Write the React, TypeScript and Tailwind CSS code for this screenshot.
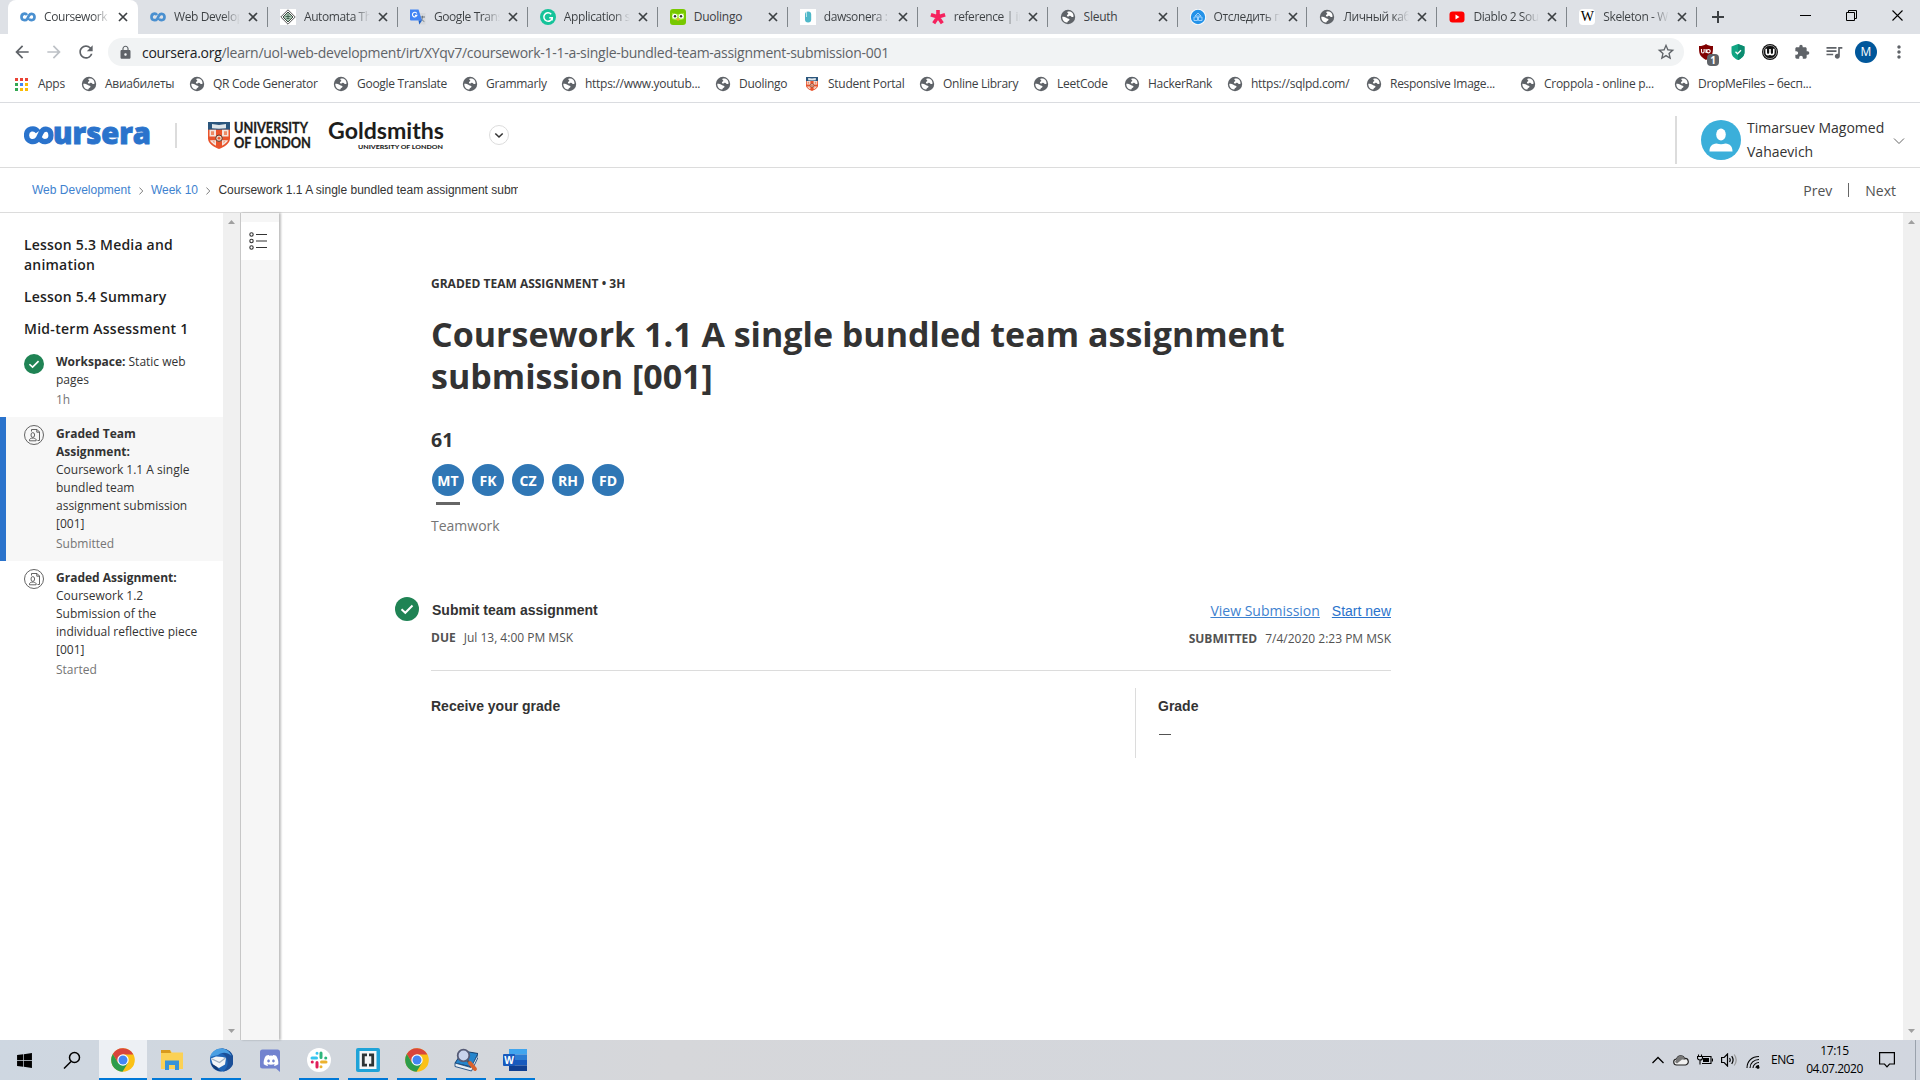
import React from "react";
import {
  MdArrowBack,
  MdArrowForward,
  MdRefresh,
  MdLock,
  MdStarBorder,
  MdExtension,
  MdMoreVert,
  MdQueueMusic,
} from "react-icons/md";
import { FaDiscord, FaWindows } from "react-icons/fa";

const Globe = () => (
  <svg viewBox="0 0 16 16" className="size-4 shrink-0">
    <circle cx="8" cy="8" r="7.200" fill="#5f6368" />
    <path d="M7.200 3c1.500-.8 3.800-.4 5 .8.900 1 1.400 2.400 1.300 3.900-.9.600-1.800.500-2.300-.2-.6-.9-1.600-.7-2.300-.3-.7.500-2 .3-2-.7 0-.8 1.400-.9 1.400-1.700 0-.7-1.100-.9-1.100-1.800z" fill="#fff" />
    <path d="M2.300 7.800c1.700.1 3.600.4 4.600 1.100 1 .700 2.600.5 2.600 1.500 0 1.100-1.400 1.200-1.800 2.100-.2.600-.2 1-.9 1.100C4.200 13.300 2.200 11 2.300 7.800z" fill="#fff" />
  </svg>
);

const CourseraMark = () => (
  <svg viewBox="0 0 16 16" className="size-4 shrink-0" fill="none" stroke="#4a90d0" strokeWidth="2.700">
    <path d="M7 6C5.500 3.800 1.500 4.500 1.500 8s4 4 5.800 1.800L9 6.500C10.500 4 14.500 4.500 14.500 8s-4 4-5.600 1.700" />
  </svg>
);

const Crest = ({ className }: { className: string }) => (
  <svg viewBox="0 0 22 28" className={className} preserveAspectRatio="none">
    <path d="M0 0h22v17c0 5-6 9-11 11C6 26 0 22 0 17z" fill="#e9532b" />
    <path d="M0 0h22v8H0z" fill="#2b567d" />
    <path d="M4 2l7 1 7-1v4.500l-7 .5-7-.5z" fill="#dfe6ea" />
    <path d="M1.500 8h6.500v7H1.500zM14 8h6.500v7H14zM2 19h6v5.500C5 23 2.500 21 2 19zM20 19h-6v5.500c3-1.500 5.500-3.500 6-5.500z" fill="#f4e4dc" />
    <path d="M3 9.500h3v4H3zM16 9.500h3v4h-3zM4.500 20h2v2zM17.500 20h-2v2z" fill="#ee8b66" />
    <circle cx="11" cy="16.800" r="3.300" fill="#f0cdb8" stroke="#5a3a30" strokeWidth="1" />
    <circle cx="11" cy="16.800" r="1.300" fill="#e9532b" />
  </svg>
);

const Automata = () => (
  <svg viewBox="0 0 16 16" className="size-4 shrink-0">
    <path d="M0 0h16v16H0z" fill="#fff" />
    <path d="M8 .8L15.200 8 8 15.200.800 8z" fill="none" stroke="#444" strokeWidth=".9" />
    <path d="M8 3l5 5-5 5-5-5z" fill="#a9c4b3" stroke="#3c4a40" strokeWidth="1" />
    <path d="M5.500 7.500h5M6.500 9.500h3M8 5v5" stroke="#385a45" strokeWidth=".8" />
  </svg>
);

const TranslateMark = () => (
  <svg viewBox="0 0 16 16" className="size-4 shrink-0">
    <path d="M7 4h8.500v11.500H9z" fill="#d5d8dc" />
    <path d="M10 8h5M12.500 6.800V8c0 2-1.500 4-2.500 4.500M11 9.500c.5 1 2 2.500 3.300 3" stroke="#6b7680" fill="none" />
    <path d="M0 .5h8.500l3.500 11H1a1 1 0 01-1-1z" fill="#4285f4" />
    <path d="M8.500 11.500h3.500l-2.700 4z" fill="#1a5fc8" />
    <path d="M6.800 4.500A2.300 2.300 0 106.900 6.400H5" stroke="#fff" strokeWidth="1.100" fill="none" />
  </svg>
);

const GrammarlyMark = () => (
  <svg viewBox="0 0 16 16" className="size-4 shrink-0">
    <circle cx="8" cy="8" r="8" fill="#15c39a" />
    <path d="M11.200 5.200A4.200 4.200 0 1012.200 8.800H9.300M12.300 8.800l-.3 2.700" stroke="#fff" strokeWidth="1.500" fill="none" />
  </svg>
);

const DuolingoMark = () => (
  <svg viewBox="0 0 16 16" className="size-4 shrink-0">
    <rect width="16" height="16" rx="3" fill="#78c800" />
    <path d="M2 4q6 2 12 0v6q-6 2.500-12 0z" fill="#a5ed3c" />
    <circle cx="4.800" cy="7.200" r="2.500" fill="#fff" />
    <circle cx="11.200" cy="7.200" r="2.500" fill="#fff" />
    <circle cx="5" cy="7.200" r="1.200" fill="#333" />
    <circle cx="11" cy="7.200" r="1.200" fill="#333" />
    <path d="M6.200 9.500h3.600L8 12.300z" fill="#f5a623" />
  </svg>
);

const DawsonMark = () => (
  <svg viewBox="0 0 16 16" className="size-4 shrink-0">
    <path d="M0 0h16v16H0z" fill="#fff" />
    <rect x="5" y="2.500" width="6.200" height="11" rx="3" fill="#4fb8c9" />
    <path d="M6.500 3v5" stroke="#b8e4ea" />
  </svg>
);

const StarMark = () => (
  <svg viewBox="0 0 16 16" className="size-4 shrink-0" stroke="#f5225e" strokeWidth="3.600">
    <path d="M8 8V1M8 8L.900 5.700M8 8l7.100-2.300M8 8l-4.300 6.300M8 8l4.300 6.300" />
  </svg>
);

const TrackMark = () => (
  <svg viewBox="0 0 16 16" className="size-4 shrink-0">
    <circle cx="8" cy="8" r="8" fill="#fff" />
    <circle cx="8" cy="8" r="7.200" fill="#2492e8" />
    <path d="M5 7l3-3 3 3zM4 8h3.500v3.500H4zM8.500 8H12v3.500H8.500z" fill="none" stroke="#a9d8ff" strokeWidth=".9" />
  </svg>
);

const YoutubeMark = () => (
  <svg viewBox="0 0 16 16" className="size-4 shrink-0">
    <rect x=".5" y="2.500" width="15" height="11" rx="3" fill="#f00" />
    <path d="M6.500 5.600v4.800L10.500 8z" fill="#fff" />
  </svg>
);

const WikiMark = () => (
  <span className="flex size-4 shrink-0 items-center justify-center rounded-sm bg-white font-['Liberation_Serif',serif] text-[14px] leading-4 text-black">
    W
  </span>
);

const tabs: { label: string; icon: React.ReactNode }[] = [
  { label: "Coursework", icon: <CourseraMark /> },
  { label: "Web Develop", icon: <CourseraMark /> },
  { label: "Automata Th", icon: <Automata /> },
  { label: "Google Trans", icon: <TranslateMark /> },
  { label: "Application s", icon: <GrammarlyMark /> },
  { label: "Duolingo", icon: <DuolingoMark /> },
  { label: "dawsonera :", icon: <DawsonMark /> },
  { label: "reference | in", icon: <StarMark /> },
  { label: "Sleuth", icon: <Globe /> },
  { label: "Отследить п", icon: <TrackMark /> },
  { label: "Личный каб", icon: <Globe /> },
  { label: "Diablo 2 Sou", icon: <YoutubeMark /> },
  { label: "Skeleton - W", icon: <WikiMark /> },
];

const bookmarks: { label: string; width: string; crest?: boolean }[] = [
  { label: "Авиабилеты", width: "w-[108px]" },
  { label: "QR Code Generator", width: "w-[144px]" },
  { label: "Google Translate", width: "w-[129px]" },
  { label: "Grammarly", width: "w-[99px]" },
  { label: "https://www.youtub...", width: "w-[154px]" },
  { label: "Duolingo", width: "w-[89px]" },
  { label: "Student Portal", width: "w-[115px]", crest: true },
  { label: "Online Library", width: "w-[114px]" },
  { label: "LeetCode", width: "w-[91px]" },
  { label: "HackerRank", width: "w-[103px]" },
  { label: "https://sqlpd.com/", width: "w-[139px]" },
  { label: "Responsive Image...", width: "w-[154px]" },
  { label: "Croppola - online p...", width: "w-[154px]" },
  { label: "DropMeFiles – бесп...", width: "w-[154px]" },
];

function TabStrip() {
  return (
    <div className="flex h-[34px] bg-[#dee1e6] pl-2">
      {tabs.map((tab, i) => (
        <div
          key={tab.label}
          className={
            i === 0
              ? "relative flex h-[34px] w-[130px] shrink-0 items-center rounded-t-lg bg-white pl-3"
              : "relative flex h-[34px] w-[129.95px] shrink-0 items-center pl-3"
          }
        >
          {tab.icon}
          <span
            className={
              tab.label.length > 9
                ? "ml-2 w-[66px] overflow-hidden whitespace-nowrap bg-linear-to-r from-[#3c4043] from-75% to-transparent bg-clip-text text-[12px] tracking-[-0.4px] text-transparent"
                : "ml-2 w-[66px] overflow-hidden whitespace-nowrap text-[12px] tracking-[-0.25px] text-[#3c4043]"
            }
          >
            {tab.label}
          </span>
          <svg viewBox="0 0 10 10" className="ml-[8px] size-[10px] shrink-0" stroke="#3c4043" strokeWidth="1.700">
            <path d="M1 1l8 8M9 1L1 9" />
          </svg>
          {i > 0 && <span className="absolute top-[7px] right-0 h-5 w-px bg-[#80868b]" />}
        </div>
      ))}
      <svg viewBox="0 0 14 14" className="mt-[10px] ml-[14px] size-[14px]" stroke="#3c4043" strokeWidth="2">
        <path d="M7 1v12M1 7h12" />
      </svg>
      <div className="mt-[9px] mr-[17px] ml-auto flex h-3 items-center gap-[35px]">
        <svg viewBox="0 0 11 11" className="size-[11px]" stroke="#000">
          <path d="M0 5.500h11" />
        </svg>
        <svg viewBox="0 0 11 11" className="size-[11px]" stroke="#000" fill="none">
          <path d="M.5 2.500h8v8h-8zM2.500 2.500v-2h8v8h-2" />
        </svg>
        <svg viewBox="0 0 11 11" className="size-[11px]" stroke="#000" strokeWidth="1.100">
          <path d="M.5.5l10 10M10.500.5l-10 10" />
        </svg>
      </div>
    </div>
  );
}

function Toolbar() {
  return (
    <div className="flex h-9 items-center pl-3">
      <MdArrowBack className="size-5 text-[#5f6368]" />
      <MdArrowForward className="ml-3 size-5 text-[#bdc1c6]" />
      <MdRefresh className="ml-3 size-5 text-[#5f6368]" />
      <div className="ml-3 flex h-7 w-[1576px] items-center rounded-full bg-[#f1f3f4] pr-2 pl-[10px]">
        <MdLock className="size-[15px] text-[#5f6368]" />
        <span className="ml-[9px] text-[14px] tracking-[-0.285px] whitespace-nowrap text-[#5f6368]">
          <span className="text-[#202124]">coursera.org</span>
          /learn/uol-web-development/irt/XYqv7/coursework-1-1-a-single-bundled-team-assignment-submission-001
        </span>
        <MdStarBorder className="ml-auto size-5 text-[#5f6368]" />
      </div>
      <div className="relative ml-[14px]">
        <svg viewBox="0 0 16 16" className="size-4">
          <path d="M8 0c2 1.500 4 2 7 2 0 7 0 10-7 14C1 12 1 9 1 2c3 0 5-.5 7-2z" fill="#800000" />
          <path d="M3.500 5v2.500q0 1.500 1.300 1.500t1.300-1.500V5M8 5v4M10.500 5.500a1.700 1.700 0 110 3.400 1.700 1.700 0 010-3.400z" stroke="#fff" strokeWidth="1.100" fill="none" />
        </svg>
        <span className="absolute top-[10px] left-[9px] flex h-3 w-3 items-center justify-center rounded-sm bg-[#5f6368] text-[10px] leading-3 font-bold text-white">
          1
        </span>
      </div>
      <svg viewBox="0 0 14 16" className="ml-[17px] h-4 w-[14px]">
        <path d="M7 0l6.500 2.500v5.500c0 4-3 6.500-6.500 8C3.500 14.500.500 12 .500 8V2.500z" fill="#11a683" />
        <path d="M7 0l6.500 2.500v5.500c0 4-3 6.500-6.500 8z" fill="#0c8c70" />
        <path d="M4.500 7.800l2 2 3.500-3.600" stroke="#fff" strokeWidth="1.300" fill="none" />
      </svg>
      <svg viewBox="0 0 16 16" className="ml-[17px] size-4">
        <circle cx="8" cy="8" r="8" fill="#111" />
        <circle cx="8" cy="8" r="6.600" fill="none" stroke="#ddd" strokeWidth=".6" />
        <path d="M4.200 4.800v3.700q0 2.200 1.800 2.200T8 8.500V5M8 8.500q0 2.200 1.900 2.200t1.900-2.200V4.800" fill="none" stroke="#fff" strokeWidth="1.600" />
      </svg>
      <MdExtension className="ml-4 size-4 text-[#5f6368]" />
      <MdQueueMusic className="ml-[14px] size-5 text-[#5f6368]" />
      <span className="ml-[11px] flex size-[22px] items-center justify-center rounded-full bg-[#01579b] text-[12px] text-white">
        M
      </span>
      <MdMoreVert className="ml-3 size-5 text-[#5f6368]" />
    </div>
  );
}

const appDots = [
  "bg-[#ea4335]", "bg-[#ea4335]", "bg-[#ea4335]",
  "bg-[#34a853]", "bg-[#4285f4]", "bg-[#fbbc05]",
  "bg-[#34a853]", "bg-[#fbbc05]", "bg-[#fbbc05]",
];

function BookmarkBar() {
  return (
    <div className="flex h-[33px] items-center border-b border-[#dadce0] pb-1 pl-[15px] text-[12px] tracking-[-0.28px] text-[#3c4043]">
      <div className="grid grid-cols-3 gap-[2px]">
        {appDots.map((c, i) => (
          <span key={i} className={`size-[3px] ${c}`} />
        ))}
      </div>
      <span className="ml-[10px] w-[43px]">Apps</span>
      {bookmarks.map((b) => (
        <div key={b.label} className={`flex shrink-0 items-center whitespace-nowrap ${b.width}`}>
          {b.crest ? <Crest className="mx-[2px] h-[14px] w-3" /> : <Globe />}
          <span className="ml-2">{b.label}</span>
        </div>
      ))}
    </div>
  );
}

function SiteHeader() {
  return (
    <header className="flex h-[65px] border-b border-[#dcdcdc] pl-6">
      <svg viewBox="0 0 128 20" className="mt-[22px] h-5 w-32" aria-label="coursera">
        <path
          d="M14 6.800C10.500 1.700 2.500 3.500 2.500 10.200S10.500 19 14.300 13.500L17 8C19.500 2.200 27 3 27 10.200S18.500 18.500 15.500 13.200"
          fill="none"
          stroke="#2a73cc"
          strokeWidth="5.200"
        />
        <text x="29" y="19" fill="#2a73cc" stroke="#2a73cc" strokeWidth=".9" textLength="98" lengthAdjust="spacingAndGlyphs" className="font-['Open_Sans',sans-serif] text-[30px] font-extrabold">
          ursera
        </text>
      </svg>
      <span className="mt-5 ml-[23px] h-[25px] w-[2px] bg-[#dcdcdc]" />
      <Crest className="mt-[19px] ml-[31px] h-[27px] w-[22px]" />
      <svg viewBox="0 0 80 30" className="mt-[18px] ml-[3px] h-[30px] w-20" fill="#1d1d1b" stroke="#1d1d1b" strokeWidth=".3">
        <text x="1" y="11.500" textLength="74" lengthAdjust="spacingAndGlyphs" className="font-['Lato',sans-serif] text-[14.5px] font-bold">UNIVERSITY</text>
        <text x="1" y="26.500" textLength="77" lengthAdjust="spacingAndGlyphs" className="font-['Lato',sans-serif] text-[14.5px] font-bold">OF LONDON</text>
      </svg>
      <svg viewBox="0 0 120 30" className="mt-[18px] ml-[15px] h-[30px] w-[120px]" fill="#1d1d1b">
        <text x="0" y="18" textLength="116" lengthAdjust="spacingAndGlyphs" className="font-['Lato',sans-serif] text-[22.5px] font-bold">Goldsmiths</text>
        <text x="30" y="27.500" textLength="85" lengthAdjust="spacingAndGlyphs" className="font-['Lato',sans-serif] text-[6px] font-black">UNIVERSITY OF LONDON</text>
      </svg>
      <svg viewBox="0 0 20 20" className="mt-[22px] ml-[41px] size-5" fill="none">
        <circle cx="10" cy="10" r="9.500" stroke="#dcdcdc" />
        <path d="M6.300 8.500L10 12l3.700-3.500" stroke="#333" strokeWidth="1.600" />
      </svg>
      <div className="ml-auto flex">
        <span className="mt-[13px] h-12 w-[2px] bg-[#dcdcdc]" />
        <svg viewBox="0 0 40 40" className="mt-[17px] ml-6 size-10">
          <circle cx="20" cy="20" r="20" fill="#3bafda" />
          <ellipse cx="20" cy="14.500" rx="4.800" ry="6" fill="#fff" />
          <path d="M8.500 31.500c0-5.500 2.500-7.500 7-8 3 1 6 1 9 0 4.500.500 7 2.500 7 8z" fill="#fff" />
        </svg>
        <span className="mt-[13px] ml-[6px] w-[146px] text-[14px] leading-6 text-[#333]">
          Timarsuev Magomed Vahaevich
        </span>
        <svg viewBox="0 0 12 8" className="mt-[34px] mr-[15px] h-2 w-3" fill="none" stroke="#666">
          <path d="M1 1.500l5 5 5-5" />
        </svg>
      </div>
    </header>
  );
}

const Crumb = () => (
  <svg viewBox="0 0 5 8" className="mx-2 mt-[2px] h-2 w-[4.4px] shrink-0" fill="none" stroke="#777" preserveAspectRatio="none">
    <path d="M.5.5L4.300 4 .500 7.500" />
  </svg>
);

function Breadcrumbs() {
  return (
    <div className="flex h-[45px] items-center border-b border-[#dcdcdc] pl-8">
      <div className="flex w-[486px] items-center overflow-hidden font-['Liberation_Sans',Arial,sans-serif] text-[12px] whitespace-nowrap text-[#333]">
        <span className="text-[#3e82cf]">Web Development</span>
        <Crumb />
        <span className="text-[#3e82cf]">Week 10</span>
        <Crumb />
        <span>Coursework 1.1 A single bundled team assignment submission [001]</span>
      </div>
      <div className="mr-6 ml-auto flex items-center text-[14px] text-[#525252]">
        <span>Prev</span>
        <span className="mx-4 h-[14px] w-px bg-[#666]" />
        <span>Next</span>
      </div>
    </div>
  );
}

const CheckCircle = ({ className }: { className: string }) => (
  <svg viewBox="0 0 24 24" className={className} fill="none">
    <circle cx="12" cy="12" r="12" fill="#1f8354" />
    <path d="M6.500 12.300l3.800 3.500 7.200-7.300" stroke="#fff" strokeWidth="2" />
  </svg>
);

const PeerIcon = () => (
  <svg viewBox="0 0 20 20" className="absolute top-2 left-6 size-5" fill="none" stroke="#525252" strokeWidth=".9">
    <circle cx="10" cy="10" r="9.500" />
    <path d="M7.500 6.500v-2h5.500l2.500 2.500v8.500h-2M12.800 4.500V7.200h2.700M5.500 15.800v-1.300c.6-1 1.500-1 2.300-1.400h1.900c.8.400 1.800.400 2.400 1.400v1.300z" />
    <ellipse cx="8.800" cy="10" rx="1.800" ry="2.400" />
  </svg>
);

const ScrollBar = () => (
  <div className="flex w-[17px] shrink-0 flex-col items-center justify-between bg-[#f0f0f0] py-[7px]">
    <svg viewBox="0 0 7 4" className="h-1 w-[7px]" fill="#a0a0a0"><path d="M0 4l3.500-4L7 4z" /></svg>
    <svg viewBox="0 0 7 4" className="h-1 w-[7px]" fill="#a0a0a0"><path d="M0 0l3.500 4L7 0z" /></svg>
  </div>
);

function Sidebar() {
  return (
    <aside className="w-[223px] shrink-0 pt-[22px] text-[#333]">
      <div className="flex flex-col gap-3 pl-6 text-[14px] leading-5 font-semibold tracking-[0.2px] text-[#1f1f1f]">
        <h3 className="w-[160px]">Lesson 5.3 Media and animation</h3>
        <h3>Lesson 5.4 Summary</h3>
        <h3 className="tracking-[0.28px]">Mid-term Assessment 1</h3>
      </div>
      <div className="text-[12px] leading-[18px]">
        <div className="relative mt-[6px] h-[72px] pt-2 pl-14">
          <CheckCircle className="absolute top-[9px] left-6 size-5" />
          <p className="w-[140px]"><b>Workspace:</b> Static web pages</p>
          <p className="mt-[2px] text-[#757575]">1h</p>
        </div>
        <div className="relative h-36 border-l-[6px] border-[#2a73cc] bg-[#f7f7f7] pt-2 pl-[50px]">
          <div className="absolute top-0 left-0 -ml-[6px]"><PeerIcon /></div>
          <p className="w-[140px]"><b>Graded Team<br />Assignment:</b><br />Coursework 1.1 A single<br />bundled team<br />assignment submission<br />[001]</p>
          <p className="mt-[2px] text-[#757575]">Submitted</p>
        </div>
        <div className="relative h-36 pt-2 pl-14">
          <PeerIcon />
          <p className="w-[150px]"><b>Graded Assignment:</b><br />Coursework 1.2<br />Submission of the<br />individual reflective piece<br />[001]</p>
          <p className="mt-[2px] text-[#757575]">Started</p>
        </div>
      </div>
    </aside>
  );
}

function Assignment() {
  return (
    <main className="w-[960px] pt-[62px] text-[#333]">
      <p className="text-[12px] leading-[18px] font-bold">GRADED TEAM ASSIGNMENT • 3H</p>
      <h1 className="mt-5 text-[34px] leading-[42px] font-bold">
        Coursework 1.1 A single bundled team assignment submission [001]
      </h1>
      <h2 className="mt-[31px] text-[19.5px] leading-6 font-bold">61</h2>
      <div className="mt-3 flex gap-2 pl-px">
        {["MT", "FK", "CZ", "RH", "FD"].map((m) => (
          <div key={m} className="flex w-8 flex-col items-center">
            <span className="flex size-8 items-center justify-center rounded-full bg-[#3077b5] text-[14px] font-bold text-white">{m}</span>
            {m === "MT" && <span className="mt-[6px] h-[3px] w-6 bg-[#666]" />}
          </div>
        ))}
      </div>
      <p className="mt-[11px] text-[14px] leading-5 text-[#757575]">Teamwork</p>
      <div className="mt-[61px] flex justify-between">
        <div className="relative">
          <CheckCircle className="absolute top-0 -left-9 size-6" />
          <p className="pt-[3px] pl-px font-['Liberation_Sans',Arial,sans-serif] text-[14px] leading-5 font-bold">Submit team assignment</p>
          <p className="mt-[9px] text-[12px] leading-[18px] text-[#525252]"><b>DUE</b><span className="ml-2">Jul 13, 4:00 PM MSK</span></p>
        </div>
        <div className="text-right">
          <p className="pt-1 text-[14px] leading-5 text-[#2a73cc]">
            <span className="text-[#3e82cf] underline">View Submission</span>
            <span className="ml-3 font-['Liberation_Sans',Arial,sans-serif] underline">Start new</span>
          </p>
          <p className="mt-[9px] text-[12px] leading-[18px] text-[#525252]"><b>SUBMITTED</b><span className="ml-2">7/4/2020 2:23 PM MSK</span></p>
        </div>
      </div>
      <div className="mt-[22px] border-t border-[#dcdcdc] pt-[17px]">
        <div className="flex h-[70px] font-['Liberation_Sans',Arial,sans-serif] text-[14px] leading-5 font-bold">
          <p className="w-[704px] pt-2">Receive your grade</p>
          <div className="border-l border-[#dcdcdc] pt-2 pl-[22px]">
            <p>Grade</p>
            <span className="mt-[18px] ml-px block h-px w-3 bg-[#525252]" />
          </div>
        </div>
      </div>
    </main>
  );
}

const ChromeIcon = () => (
  <svg viewBox="0 0 24 24" className="size-6">
    <circle cx="12" cy="12" r="11.800" fill="#fbc116" />
    <path d="M1.800 6A11.800 11.800 0 0122.300 6.500H12L7 14.800z" fill="#d9453c" />
    <path d="M1.800 6A11.800 11.800 0 0011.500 23.800L17 14.800 12 12l-5 2.800z" fill="#2c9c4b" />
    <circle cx="12" cy="12" r="5.700" fill="#fff" />
    <circle cx="12" cy="12" r="4.500" fill="#4486f3" />
  </svg>
);
const FolderIcon = () => (
  <svg viewBox="0 0 24 24" className="size-6">
    <path d="M1 2h9l2 2.500h11V21H1z" fill="#fbd155" />
    <path d="M1 2h9l1 3H1z" fill="#d89a1d" />
    <path d="M5 12.500h14V22h-4v-5H9v5H5z" fill="#3793d9" />
  </svg>
);
const ThunderbirdIcon = () => (
  <svg viewBox="0 0 24 24" className="size-6">
    <circle cx="12.500" cy="12" r="11.500" fill="#1f65b7" />
    <path d="M12.500.5A11.500 11.500 0 0114 23.500C21 19 20 8 12 5z" fill="#1b4f98" />
    <path d="M1 9C3 3 8 0 13 .5 18 1 21 4 22.500 8 18 4 13 4 9 7z" fill="#4a9fe3" />
    <path d="M2 10.500l5-2 6.500.5 3.500 1-1 6.500-6 3.500-6-3z" fill="#f3f5f7" />
    <path d="M3 11l7.500 3.500L16.500 10" stroke="#9fb0c2" strokeWidth="1.200" fill="none" />
    <path d="M2 15c1 4.500 5 8 11 8.400-3-1.400-4.500-3-5-4.500z" fill="#123a75" />
  </svg>
);
const SlackIcon = () => (
  <svg viewBox="0 0 24 24" className="size-6" fill="none" strokeWidth="3" strokeLinecap="round">
    <circle cx="12" cy="12" r="12" fill="#fff" />
    <path d="M5 10h4.500M10 5.200v.1" stroke="#36c5f0" />
    <path d="M14 5v4.500M18.800 10h-.1" stroke="#2eb67d" />
    <path d="M19 14h-4.500M14 18.800v-.1" stroke="#ecb22e" />
    <path d="M10 19v-4.500M5.200 14h.1" stroke="#e01e5a" />
  </svg>
);
const BracketsIcon = () => (
  <svg viewBox="0 0 24 24" className="size-6">
    <rect width="24" height="24" rx="2" fill="#1fa3d8" />
    <path d="M3.500 3h17v18h-17z" fill="#f4f6f7" />
    <path d="M11 6.800H7.300v10.400H11M13 6.800h3.700v10.400H13" fill="none" stroke="#2d3436" strokeWidth="2.800" />
  </svg>
);
const SearchBookIcon = () => (
  <svg viewBox="0 0 24 24" className="size-6">
    <path d="M9 3l15 2.500L18 19 1 15z" fill="#2585cc" stroke="#15416f" />
    <path d="M1 15l16 4.500L24 6v3.500L17.500 23 1 18.500z" fill="#e8eef3" stroke="#1d4c80" strokeWidth=".9" />
    <path d="M13 12l2.500 3" stroke="#555" strokeWidth="2.500" />
    <path d="M16 15l5 6" stroke="#d9612c" strokeWidth="3.800" strokeLinecap="round" />
    <circle cx="9.500" cy="7.500" r="5.800" fill="#c9d3ec" stroke="#565b76" strokeWidth="1.800" />
  </svg>
);
const WordIcon = () => (
  <svg viewBox="0 0 24 24" className="size-6">
    <path d="M6 1h18v5.500H6z" fill="#41a5ee" />
    <path d="M6 6.500h18V12H6z" fill="#2b7cd3" />
    <path d="M6 12h18v5.500H6z" fill="#185abd" />
    <path d="M6 17.500h18V23H6z" fill="#103f91" />
    <rect y="6" width="12" height="12" rx="1" fill="#185abd" />
    <text x="6" y="15.500" textAnchor="middle" fill="#fff" className="font-['Open_Sans',sans-serif] text-[10px] font-bold">W</text>
  </svg>
);

const DiscordIcon = () => (
  <svg viewBox="0 0 24 24" className="size-6">
    <path d="M4.500 1.500h15a2.500 2.500 0 012.500 2.500v20l-4-3.500H4.500A2.500 2.500 0 012 18V4a2.500 2.500 0 012.500-2.500z" fill="#7283cf" />
    <FaDiscord x="5" y="4.500" width="14" height="14" color="#fff" />
  </svg>
);

const apps: { icon: React.ReactNode; running: boolean }[] = [
  { icon: <FolderIcon />, running: true },
  { icon: <ThunderbirdIcon />, running: true },
  { icon: <DiscordIcon />, running: false },
  { icon: <SlackIcon />, running: true },
  { icon: <BracketsIcon />, running: true },
  { icon: <ChromeIcon />, running: true },
  { icon: <SearchBookIcon />, running: true },
  { icon: <WordIcon />, running: true },
];

function Taskbar() {
  return (
    <footer className="flex h-10 bg-linear-to-r from-[#ced7e1] via-[#d6d7da] via-35% to-[#d1d6df]">
      <span className="flex w-12 items-center justify-center"><FaWindows className="size-[17px] text-black" /></span>
      <span className="flex w-12 items-center justify-center">
        <svg viewBox="0 0 18 18" className="size-[18px]" fill="none" stroke="#000" strokeWidth="1.500">
          <circle cx="11.500" cy="6.500" r="5" />
          <path d="M8 10.500L1 17.500" />
        </svg>
      </span>
      <span className="ml-[3px] flex w-12 items-center justify-center border-b-2 border-[#0078d7] bg-[#edf0f4] pt-[2px]"><ChromeIcon /></span>
      <div className="ml-[5px] flex gap-[9px]">
        {apps.map((a, i) => (
          <span key={i} className={a.running ? "flex w-10 items-center justify-center border-b-2 border-[#0078d7] pt-[2px]" : "flex w-10 items-center justify-center"}>
            {a.icon}
          </span>
        ))}
      </div>
      <div className="ml-auto flex items-center text-[12px] text-black">
        <svg viewBox="0 0 12 8" className="h-2 w-3" fill="none" stroke="#000" strokeWidth="1.300"><path d="M.5 7L6 1.500 11.500 7" /></svg>
        <svg viewBox="0 0 16 12" className="ml-[9px] h-3 w-4" fill="#f1f1f1" stroke="#222" strokeWidth="1.200">
          <path d="M4 11a3 3 0 01-.5-6C5 1 10 .5 11.500 4.500A3.200 3.200 0 0112.500 11z" />
          <path d="M3.500 5C5 1 10 .5 11.500 4.500L13 6l-4-.5L4 9.500 2 8z" fill="#777" stroke="none" />
        </svg>
        <svg viewBox="0 0 16 12" className="ml-2 h-3 w-4" fill="none" stroke="#000" strokeWidth="1.100">
          <path d="M6 2.500h8v7H5M15.500 4.500v3M1.500.5v2M4.500.5v2M.5 2.500h5v1.500q0 2-2.500 2T.5 4zM3 6v4.500" />
          <path d="M6 4h6v4H6z" fill="#000" stroke="none" />
        </svg>
        <svg viewBox="0 0 17 14" className="ml-2 h-[14px] w-[17px]" fill="none" stroke="#000" strokeWidth="1.200">
          <path d="M.6 4.500h2.500L6.500 1v12L3.100 9.500H.600zM8.500 5q1.500 2 0 4M10.700 3.200q2.800 3.800 0 7.600" />
          <path d="M13.200 1.500q4 5.500 0 11" stroke="#999" />
        </svg>
        <svg viewBox="0 0 14 14" className="mt-1 ml-2 size-[14px]" fill="none" stroke="#000" strokeWidth="1.100">
          <path d="M1 13C1 6 6 1.500 13 1.500M4 13C4 8 8 4.500 13 4.500M7 13c0-3 3-5.500 6-5.500M10 13c0-1.500 1.500-2.500 3-2.500" />
          <circle cx="12" cy="12.200" r="1" fill="#000" />
        </svg>
        <span className="ml-[11px] w-[23px] tracking-[-0.5px]">ENG</span>
        <div className="ml-[12px] w-[57px] pb-px text-center leading-[18px] tracking-[-0.45px] whitespace-nowrap">
          <p>17:15</p>
          <p>04.07.2020</p>
        </div>
        <svg viewBox="0 0 16 16" className="ml-4 size-4" fill="none" stroke="#000" strokeWidth="1.200">
          <path d="M.6.600h14.800v11.400H10.500L8 14.800 5.500 12H.600z" />
        </svg>
        <span className="mr-1 ml-5 h-10 w-px bg-[#9aa2ac]" />
      </div>
    </footer>
  );
}

export default function App() {
  return (
    <div className="flex h-[1080px] w-[1920px] flex-col overflow-hidden bg-white font-['Open_Sans','Noto_Sans',sans-serif]">
      <TabStrip />
      <Toolbar />
      <BookmarkBar />
      <SiteHeader />
      <Breadcrumbs />
      <div className="flex min-h-0 flex-1">
        <Sidebar />
        <ScrollBar />
        <div className="z-10 w-[39px] shrink-0 border-l border-[#c7c7c7] bg-[#f6f6f6] pt-[9px] shadow-[2px_0_2px_rgba(0,0,0,0.25)]">
          <div className="flex h-[38px] items-center justify-center bg-white pr-1 pb-px">
            <svg viewBox="0 0 18 18" className="size-[18px]" fill="none" stroke="#333" strokeWidth="1.100">
              <path d="M7 2.500h11M7 9h11M7 15.500h11" />
              <circle cx="2.500" cy="2.500" r="1.700" />
              <circle cx="2.500" cy="9" r="1.700" />
              <circle cx="2.500" cy="15.500" r="1.700" />
            </svg>
          </div>
        </div>
        <div className="flex-1 pl-[152px]">
          <Assignment />
        </div>
        <ScrollBar />
      </div>
      <Taskbar />
    </div>
  );
}
